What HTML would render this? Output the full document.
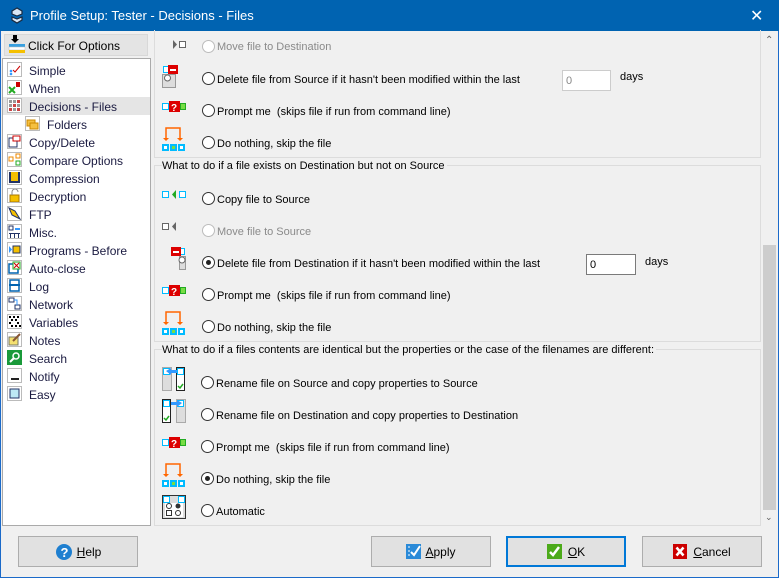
<!DOCTYPE html>
<html><head><meta charset="utf-8"><style>
*{margin:0;padding:0;box-sizing:border-box}
body{width:779px;height:578px;overflow:hidden;background:#f0f0f0;font-family:"Liberation Sans",sans-serif;font-size:12px;color:#000;position:relative}
.a{position:absolute}
#win{position:absolute;left:0;top:0;width:779px;height:578px;border:1px solid #1b6ac9}
#title{position:absolute;left:0;top:0;width:779px;height:31px;background:#0063b1;color:#fff;font-size:14px}
.li{position:absolute;left:29px;color:#1a1a40;font-size:12px}
.ic{position:absolute;left:7px;width:15px;height:15px;border:1px solid #bbb;background:#fff}
.r{position:absolute;left:202px;width:13px;height:13px;border:1px solid #333;border-radius:50%;background:#fff}
.r.d{border-color:#bcbcbc}
.r.s::after{content:"";position:absolute;left:3px;top:3px;width:5px;height:5px;border-radius:50%;background:#222}
.t{position:absolute;left:217px;font-size:11px;white-space:nowrap}
.t.d{color:#8a8a8a}
.grp{position:absolute;border:1px solid #dcdcdc}
.hd{position:absolute;left:162px;font-size:11px;background:#f0f0f0;padding-right:2px}
.btn{position:absolute;top:536px;width:120px;height:31px;border:1px solid #adadad;background:#e1e1e1;font-size:12px;display:flex;align-items:center;justify-content:center}
.sv{position:absolute;left:161px}
</style></head><body>
<div id="win"></div>
<div id="title">
<svg class="a" style="left:10px;top:7px" width="14" height="17" viewBox="0 0 14 17"><path d="M7 1L2 4v3l5 2 5-2V4zM2 10l5 2 5-2v3l-5 3-5-3z" fill="#d8e6f5" stroke="#1a2a40" stroke-width="1.2"/></svg>
<span class="a" style="left:30px;top:8px;font-size:13px">Profile Setup: Tester - Decisions - Files</span>
<span class="a" style="left:750px;top:6px;font-size:16px">✕</span>
</div>

<div class="a" style="left:4px;top:34px;width:144px;height:22px;background:#e4e4e4;border:1px solid #d8d8d8"></div>
<svg class="a" style="left:8px;top:35px" width="18" height="18"><rect x="5" y="0" width="4" height="4" fill="#000"/><path d="M3 4h8l-4 4z" fill="#000"/><rect x="1" y="9" width="16" height="3" fill="#39a0e0"/><rect x="1" y="12" width="16" height="3" fill="#fff" stroke="#bbb" stroke-width=".5"/><rect x="1" y="15" width="16" height="3" fill="#f5c000"/></svg>
<span class="a" style="left:28px;top:39px;font-size:12px">Click For Options</span>
<div class="a" style="left:2px;top:58px;width:149px;height:468px;background:#fff;border:1px solid #aaa"></div>
<div class="a" style="left:3px;top:97px;width:147px;height:18px;background:#e5e5e5"></div>

<div class="ic" style="top:62px"><svg width="13" height="13"><circle cx="3" cy="8" r="1.3" fill="#39f"/><circle cx="3" cy="11" r="1.3" fill="#39f"/><path d="M5 7l2 2 5-6" stroke="#c00" fill="none"/></svg></div><span class="li" style="top:64px">Simple</span>
<div class="ic" style="top:80px"><svg width="13" height="13"><path d="M1 6l6 6M7 6l-6 6" stroke="#2a2" stroke-width="2"/><rect x="8" y="1" width="4" height="5" fill="#c00"/></svg></div><span class="li" style="top:82px">When</span>
<div class="ic" style="top:98px"><svg width="13" height="13" fill="#999"><rect x="1" y="1" width="3" height="3"/><rect x="5" y="1" width="3" height="3"/><rect x="9" y="1" width="3" height="3" fill="#c44"/><rect x="1" y="5" width="3" height="3"/><rect x="5" y="5" width="3" height="3" fill="#c44"/><rect x="9" y="5" width="3" height="3"/><rect x="1" y="9" width="3" height="3" fill="#c44"/><rect x="5" y="9" width="3" height="3"/><rect x="9" y="9" width="3" height="3" fill="#c44"/></svg></div><span class="li" style="top:100px">Decisions - Files</span>
<div class="ic" style="top:116px;left:25px"><svg width="13" height="13"><rect x="1" y="3" width="8" height="6" fill="#f5c040" stroke="#c80"/><rect x="4" y="6" width="8" height="6" fill="#f5c040" stroke="#c80"/></svg></div><span class="li" style="top:118px;left:47px">Folders</span>
<div class="ic" style="top:134px"><svg width="13" height="13"><rect x="1" y="3" width="8" height="9" fill="#fff" stroke="#236"/><rect x="5" y="1" width="7" height="5" fill="#fff" stroke="#c00"/></svg></div><span class="li" style="top:136px">Copy/Delete</span>
<div class="ic" style="top:152px"><svg width="13" height="13"><rect x="1" y="4" width="4" height="4" fill="none" stroke="#e80"/><rect x="8" y="1" width="4" height="4" fill="none" stroke="#e80"/><rect x="8" y="8" width="4" height="4" fill="none" stroke="#2a2"/></svg></div><span class="li" style="top:154px">Compare Options</span>
<div class="ic" style="top:170px"><svg width="13" height="13"><path d="M2 1v10h9V1" stroke="#236" stroke-width="2" fill="#f5c000"/></svg></div><span class="li" style="top:172px">Compression</span>
<div class="ic" style="top:188px"><svg width="13" height="13"><rect x="2" y="6" width="9" height="7" fill="#f5c000" stroke="#a70"/><path d="M4 6V3a3 3 0 0 1 6 0" stroke="#888" fill="none"/></svg></div><span class="li" style="top:190px">Decryption</span>
<div class="ic" style="top:206px"><svg width="13" height="13"><path d="M1 1l6 3 5 8-8-4z" fill="#f5c000" stroke="#236"/></svg></div><span class="li" style="top:208px">FTP</span>
<div class="ic" style="top:224px"><svg width="13" height="13" fill="#236"><rect x="1" y="1" width="4" height="4" fill="none" stroke="#236"/><rect x="7" y="3" width="5" height="2" fill="#39f"/><path d="M1 8h11v1H1zM2 9h1v4H2zM6 9h1v4H6zM10 9h1v4h-1z"/></svg></div><span class="li" style="top:226px">Misc.</span>
<div class="ic" style="top:242px"><svg width="13" height="13"><path d="M1 3v7l3-3.5z" fill="#39f"/><rect x="5" y="3" width="7" height="7" fill="#f5c000" stroke="#236"/></svg></div><span class="li" style="top:244px">Programs - Before</span>
<div class="ic" style="top:260px"><svg width="13" height="13"><rect x="1" y="3" width="9" height="9" fill="#fff" stroke="#0063b1" stroke-width="1.5"/><rect x="5" y="1" width="7" height="7" fill="#fff" stroke="#2a2"/><path d="M6 2l5 5M11 2l-5 5" stroke="#c00"/></svg></div><span class="li" style="top:262px">Auto-close</span>
<div class="ic" style="top:278px"><svg width="13" height="13"><rect x="2" y="1" width="9" height="11" fill="none" stroke="#0063b1" stroke-width="1.5"/><path d="M1 6h11" stroke="#0063b1" stroke-width="2"/></svg></div><span class="li" style="top:280px">Log</span>
<div class="ic" style="top:296px"><svg width="13" height="13"><rect x="1" y="1" width="5" height="4" fill="none" stroke="#236"/><rect x="7" y="8" width="5" height="4" fill="none" stroke="#236"/><path d="M6 3h3v5" stroke="#39f" fill="none"/></svg></div><span class="li" style="top:298px">Network</span>
<div class="ic" style="top:314px"><svg width="13" height="13" fill="#000"><rect x="1" y="1" width="2" height="2"/><rect x="5" y="1" width="2" height="2"/><rect x="9" y="1" width="2" height="2"/><rect x="3" y="4" width="2" height="2"/><rect x="7" y="4" width="2" height="2"/><rect x="1" y="7" width="2" height="2"/><rect x="9" y="7" width="2" height="2"/><rect x="3" y="10" width="2" height="2"/><rect x="7" y="10" width="2" height="2"/><rect x="11" y="10" width="2" height="2"/></svg></div><span class="li" style="top:316px">Variables</span>
<div class="ic" style="top:332px"><svg width="13" height="13"><rect x="1" y="4" width="9" height="8" fill="#f5e070" stroke="#776"/><path d="M5 8l7-7" stroke="#853" stroke-width="2"/></svg></div><span class="li" style="top:334px">Notes</span>
<div class="ic" style="top:350px;background:#1a9a3a;border-color:#1a9a3a"><svg width="13" height="13"><circle cx="8" cy="5" r="3" fill="none" stroke="#fff" stroke-width="1.5"/><path d="M6 7l-4 4" stroke="#fff" stroke-width="2"/></svg></div><span class="li" style="top:352px">Search</span>
<div class="ic" style="top:368px"><svg width="13" height="13"><rect x="3" y="9" width="8" height="2" fill="#222"/></svg></div><span class="li" style="top:370px">Notify</span>
<div class="ic" style="top:386px"><svg width="13" height="13"><rect x="2" y="2" width="9" height="9" fill="#bde9f5" stroke="#236"/></svg></div><span class="li" style="top:388px">Easy</span>

<div class="a" style="left:762px;top:32px;width:15px;height:495px;background:#f0f0f0"></div>
<div class="a" style="left:763px;top:245px;width:13px;height:265px;background:#cdcdcd"></div>
<span class="a" style="left:765px;top:35px;font-size:10px;color:#606060">⌃</span>
<span class="a" style="left:765px;top:512px;font-size:9px;color:#606060">⌄</span>

<div class="grp" style="left:154px;top:30px;width:607px;height:128px;border-top:none"></div>
<div class="grp" style="left:154px;top:165px;width:607px;height:177px"></div>
<span class="hd" style="top:160px">What to do if a file exists on Destination but not on Source</span>
<div class="grp" style="left:154px;top:349px;width:607px;height:177px"></div>
<span class="hd" style="top:344px">What to do if a files contents are identical but the properties or the case of the filenames are different:</span>

<svg class="sv" style="top:38px" width="26" height="14"><path d="M12 2v9l4-4.5z" fill="#666"/><rect x="18.5" y="3.5" width="6" height="6" fill="#fff" stroke="#666"/></svg>
<svg class="sv" style="top:64px" width="26" height="28"><rect x="2.5" y="2.5" width="6" height="6" fill="#fff" stroke="#0bf"/><rect x="7" y="1" width="10" height="9" fill="#d00"/><rect x="9" y="5" width="6" height="2" fill="#fff"/><rect x="1.5" y="10.5" width="13" height="13" fill="#ddd" stroke="#999"/><circle cx="6.5" cy="14" r="3" fill="#fff" stroke="#666"/></svg>
<svg class="sv" style="top:100px" width="26" height="14"><rect x="1.5" y="3.5" width="6" height="6" fill="#fff" stroke="#0bf"/><rect x="8" y="1" width="11" height="11" fill="#d00"/><text x="10" y="11" font-size="10" font-weight="bold" fill="#fff" font-family="Liberation Sans">?</text><rect x="19.5" y="3.5" width="5" height="6" fill="#7d4" stroke="#2a2"/></svg>
<svg class="sv" style="top:126px" width="26" height="28"><path d="M5 14V2h14v12" stroke="#f60" stroke-width="1.5" fill="none"/><path d="M2 12h6l-3 3zM16 12h6l-3 3z" fill="#f60"/><rect x="1" y="18" width="7" height="7" fill="#0bf"/><rect x="9" y="18" width="7" height="7" fill="#0bf"/><rect x="17" y="18" width="7" height="7" fill="#0bf"/><rect x="3" y="20" width="3" height="3" fill="#fff"/><rect x="11" y="20" width="3" height="3" fill="#7d4"/><rect x="19" y="20" width="3" height="3" fill="#fff"/></svg>
<svg class="sv" style="top:188px" width="26" height="14"><rect x="1.5" y="3.5" width="6" height="6" fill="#fff" stroke="#0bf"/><path d="M15 2v9l-4-4.5z" fill="#2a2"/><rect x="18.5" y="3.5" width="6" height="6" fill="#fff" stroke="#0bf"/></svg>
<svg class="sv" style="top:220px" width="26" height="14"><rect x="1.5" y="3.5" width="6" height="6" fill="#fff" stroke="#666"/><path d="M15 2v9l-4-4.5z" fill="#666"/></svg>
<svg class="sv" style="top:246px" width="26" height="28"><rect x="17.5" y="2.5" width="6" height="6" fill="#fff" stroke="#0bf"/><rect x="10" y="1" width="10" height="9" fill="#d00"/><rect x="12" y="5" width="6" height="2" fill="#fff"/><rect x="18.5" y="10.5" width="6" height="13" fill="#ddd" stroke="#999"/><circle cx="21" cy="14" r="3" fill="#fff" stroke="#666"/></svg>
<svg class="sv" style="top:284px" width="26" height="14"><rect x="1.5" y="3.5" width="6" height="6" fill="#fff" stroke="#0bf"/><rect x="8" y="1" width="11" height="11" fill="#d00"/><text x="10" y="11" font-size="10" font-weight="bold" fill="#fff" font-family="Liberation Sans">?</text><rect x="19.5" y="3.5" width="5" height="6" fill="#7d4" stroke="#2a2"/></svg>
<svg class="sv" style="top:310px" width="26" height="28"><path d="M5 14V2h14v12" stroke="#f60" stroke-width="1.5" fill="none"/><path d="M2 12h6l-3 3zM16 12h6l-3 3z" fill="#f60"/><rect x="1" y="18" width="7" height="7" fill="#0bf"/><rect x="9" y="18" width="7" height="7" fill="#0bf"/><rect x="17" y="18" width="7" height="7" fill="#0bf"/><rect x="3" y="20" width="3" height="3" fill="#fff"/><rect x="11" y="20" width="3" height="3" fill="#7d4"/><rect x="19" y="20" width="3" height="3" fill="#fff"/></svg>
<svg class="sv" style="top:366px" width="26" height="30"><rect x="1.5" y="1.5" width="9" height="23" fill="#ddd" stroke="#aaa"/><rect x="15.5" y="1.5" width="8" height="23" fill="#fff" stroke="#222"/><rect x="2.5" y="2.5" width="6" height="6" fill="#fff" stroke="#0bf"/><rect x="16.5" y="2.5" width="6" height="6" fill="#fff" stroke="#0bf"/><path d="M5 5l5-3v2h6v3h-6v2z" fill="#39f"/><path d="M17 20l2 2 3-4" stroke="#2a2" fill="none" stroke-width="1.5"/></svg>
<svg class="sv" style="top:398px" width="26" height="30"><rect x="1.5" y="1.5" width="8" height="23" fill="#fff" stroke="#222"/><rect x="15.5" y="1.5" width="9" height="23" fill="#ddd" stroke="#aaa"/><rect x="2.5" y="2.5" width="6" height="6" fill="#fff" stroke="#0bf"/><rect x="16.5" y="2.5" width="6" height="6" fill="#fff" stroke="#0bf"/><path d="M21 5l-5-3v2h-6v3h6v2z" fill="#39f"/><path d="M3 20l2 2 3-4" stroke="#2a2" fill="none" stroke-width="1.5"/></svg>
<svg class="sv" style="top:436px" width="26" height="14"><rect x="1.5" y="3.5" width="6" height="6" fill="#fff" stroke="#0bf"/><rect x="8" y="1" width="11" height="11" fill="#d00"/><text x="10" y="11" font-size="10" font-weight="bold" fill="#fff" font-family="Liberation Sans">?</text><rect x="19.5" y="3.5" width="5" height="6" fill="#7d4" stroke="#2a2"/></svg>
<svg class="sv" style="top:462px" width="26" height="28"><path d="M5 14V2h14v12" stroke="#f60" stroke-width="1.5" fill="none"/><path d="M2 12h6l-3 3zM16 12h6l-3 3z" fill="#f60"/><rect x="1" y="18" width="7" height="7" fill="#0bf"/><rect x="9" y="18" width="7" height="7" fill="#0bf"/><rect x="17" y="18" width="7" height="7" fill="#0bf"/><rect x="3" y="20" width="3" height="3" fill="#fff"/><rect x="11" y="20" width="3" height="3" fill="#7d4"/><rect x="19" y="20" width="3" height="3" fill="#fff"/></svg>
<svg class="sv" style="top:494px" width="26" height="30"><rect x="1.5" y="1.5" width="23" height="23" fill="#ddd" stroke="#333"/><rect x="2.5" y="2.5" width="6" height="6" fill="#fff" stroke="#0bf"/><rect x="17.5" y="2.5" width="6" height="6" fill="#fff" stroke="#0bf"/><rect x="4" y="9" width="18" height="14" fill="#fff"/><circle cx="8" cy="12" r="2.5" fill="none" stroke="#333"/><circle cx="17" cy="12" r="2.5" fill="#333"/><rect x="5.5" y="16.5" width="5" height="5" fill="none" stroke="#333"/><circle cx="17" cy="19" r="2.5" fill="none" stroke="#333"/></svg>

<div class="r d" style="top:40px"></div><span class="t d" style="top:41px">Move file to Destination</span>
<div class="r" style="top:72px"></div><span class="t" style="top:74px">Delete file from Source if it hasn't been modified within the last</span>
<div class="a" style="left:562px;top:70px;width:49px;height:21px;background:#fff;border:1px solid #ccc;font-size:11px;color:#888;padding:4px 3px">0</div>
<span class="a" style="left:620px;top:71px;font-size:11px">days</span>
<div class="r" style="top:104px"></div><span class="t" style="top:106px">Prompt me&nbsp; (skips file if run from command line)</span>
<div class="r" style="top:136px"></div><span class="t" style="top:138px">Do nothing, skip the file</span>

<div class="r" style="top:192px"></div><span class="t" style="top:194px">Copy file to Source</span>
<div class="r d" style="top:224px"></div><span class="t d" style="top:226px">Move file to Source</span>
<div class="r s" style="top:256px"></div><span class="t" style="top:258px">Delete file from Destination if it hasn't been modified within the last</span>
<div class="a" style="left:586px;top:254px;width:50px;height:21px;background:#fff;border:1px solid #7a7a7a;font-size:11px;padding:4px 3px">0</div>
<span class="a" style="left:645px;top:256px;font-size:11px">days</span>
<div class="r" style="top:288px"></div><span class="t" style="top:290px">Prompt me&nbsp; (skips file if run from command line)</span>
<div class="r" style="top:320px"></div><span class="t" style="top:322px">Do nothing, skip the file</span>

<div class="r" style="top:376px;left:201px"></div><span class="t" style="top:378px;left:216px">Rename file on Source and copy properties to Source</span>
<div class="r" style="top:408px;left:201px"></div><span class="t" style="top:410px;left:216px">Rename file on Destination and copy properties to Destination</span>
<div class="r" style="top:440px;left:201px"></div><span class="t" style="top:442px;left:216px">Prompt me&nbsp; (skips file if run from command line)</span>
<div class="r s" style="top:472px;left:201px"></div><span class="t" style="top:474px;left:216px">Do nothing, skip the file</span>
<div class="r" style="top:504px;left:201px"></div><span class="t" style="top:506px;left:216px">Automatic</span>

<div class="btn" style="left:18px"><svg width="18" height="18" style="margin-right:4px"><circle cx="9" cy="9" r="8" fill="#1e7fd0"/><text x="5.5" y="14" font-size="13" font-weight="bold" fill="#fff" font-family="Liberation Sans">?</text></svg><u>H</u>elp</div>
<div class="btn" style="left:371px"><svg width="15" height="15" style="margin-right:4px"><rect width="15" height="15" fill="#2a8ad8"/><path d="M2 3h2M2 7h2M2 11h2" stroke="#fff"/><path d="M5 8l3 3 6-9" stroke="#fff" stroke-width="2" fill="none"/></svg><u>A</u>pply</div>
<div class="btn" style="left:506px;border:2px solid #0078d7"><svg width="15" height="15" style="margin-right:6px"><rect width="15" height="15" fill="#4caa1a"/><path d="M3 8l3 3 6-8" stroke="#fff" stroke-width="2.5" fill="none"/></svg><u>O</u>K</div>
<div class="btn" style="left:642px"><svg width="14" height="15" style="margin-right:6px"><rect width="14" height="15" fill="#cc0000"/><path d="M3.5 3.5l7 8M10.5 3.5l-7 8" stroke="#fff" stroke-width="2.5"/></svg><u>C</u>ancel</div>
</body></html>
